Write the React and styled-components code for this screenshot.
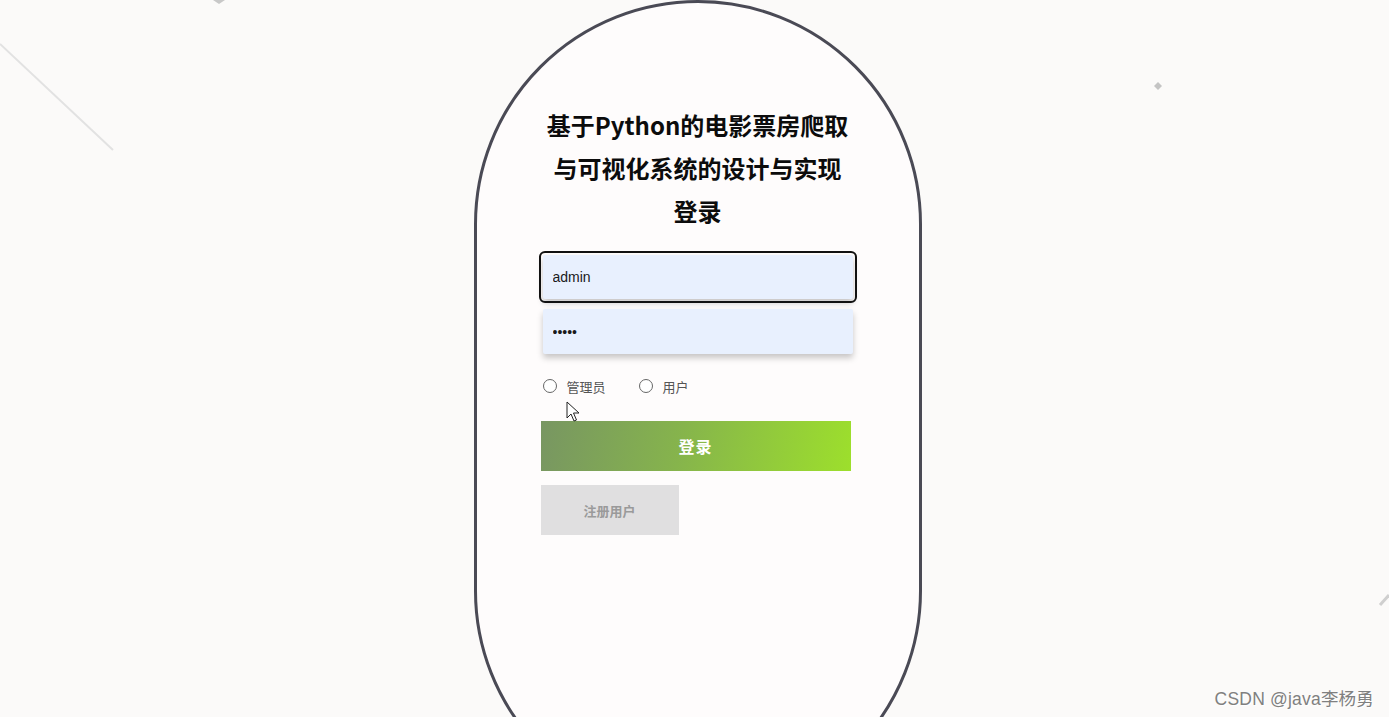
import styled, { createGlobalStyle } from 'styled-components';

const GlobalStyle = createGlobalStyle`
	html, body {
		margin: 0;
		padding: 0;
		height: 100%;
		background: #fbfaf9;
		overflow: hidden;
	}
	body {
		font-family: "Noto Sans CJK SC", "Noto Sans", sans-serif;
	}
`;

const Page = styled.div`
	position: relative;
	width: 100vw;
	height: 100vh;
	overflow: hidden;
	display: flex;
	justify-content: center;
	padding-left: 6px;
	box-sizing: border-box;
`;

const Backdrop = styled.svg`
	position: absolute;
	left: 0;
	top: 0;
	width: 100%;
	height: 100%;
	pointer-events: none;
`;

const Pill = styled.div`
	position: relative;
	width: 448px;
	height: 815px;
	flex-shrink: 0;
	box-sizing: border-box;
	border: 3px solid #4a4a55;
	border-radius: 224px;
	background: #fefcfc;
	display: flex;
	flex-direction: column;
	align-items: center;
	padding-top: 100px;
`;

const Title = styled.h2`
	margin: 0;
	font-size: 24px;
	line-height: 43px;
	font-weight: 700;
	color: #0c0c0c;
	text-align: center;
`;

const Form = styled.form`
	width: 310px;
	margin-top: 23px;
	margin-right: 4px;
	display: flex;
	flex-direction: column;
`;

const Input = styled.input`
	width: 310px;
	margin-left: 2px;
	height: ${(p) => p.$h || 44}px;
	box-sizing: border-box;
	border: none;
	border-radius: 2px;
	background: #e8f0fe;
	padding: 0 10px;
	font-family: "Liberation Sans", Arial, sans-serif;
	font-size: 14px;
	color: #1a1a1a;
	box-shadow: 0 4px 6px rgba(0, 0, 0, 0.22);
	outline: ${(p) => (p.$focus ? '2px solid #111' : 'none')};
	outline-offset: 2px;
	margin-bottom: ${(p) => p.$mb || 0}px;
`;

const RadioRow = styled.div`
	display: flex;
	align-items: center;
	height: 20px;
	margin-top: 22px;
	padding-left: 2px;
	font-size: 13px;
	color: #555;
`;

const RadioLabel = styled.label`
	display: flex;
	align-items: center;
	margin-right: 33px;
	gap: 10px;
`;

const RadioDot = styled.span`
	width: 12px;
	height: 12px;
	border: 1px solid #666;
	border-radius: 50%;
	background: #fff;
`;

const LoginButton = styled.button`
	margin-top: 25px;
	width: 310px;
	height: 50px;
	border: none;
	background: linear-gradient(100deg, #789662 0%, #86b44c 45%, #9ddf2c 100%);
	color: #fff;
	font-family: inherit;
	font-size: 16px;
	font-weight: 700;
	letter-spacing: 1px;
`;

const RegisterButton = styled.button`
	margin-top: 14px;
	width: 138px;
	height: 50px;
	border: none;
	background: #e0dfe0;
	color: #9a9a9a;
	font-family: inherit;
	font-size: 13px;
	font-weight: 700;
`;

const Pointer = styled.svg`
	position: absolute;
	left: 566px;
	top: 401px;
	width: 16px;
	height: 22px;
	pointer-events: none;
`;

const Watermark = styled.div`
	position: absolute;
	right: 15px;
	bottom: 7px;
	font-family: "Liberation Sans", "Noto Sans CJK SC", sans-serif;
	font-size: 17.5px;
	letter-spacing: 0.2px;
	color: #808080;
	text-shadow: 1px 1px 0 #ffffff;
`;

export default function App() {
	return (
		<>
			<GlobalStyle />
			<Page>
				<Backdrop viewBox="0 0 1389 717" preserveAspectRatio="none">
					<line x1="0" y1="44" x2="113" y2="150" stroke="#e2e2e2" strokeWidth="2" />
					<polygon points="213,0 225,0 219,4" fill="#c8c8c8" />
					<polygon points="1158,82 1162,86 1158,90 1154,86" fill="#c4c4c4" />
					<line x1="1380" y1="605" x2="1389" y2="595" stroke="#cfcfcf" strokeWidth="3" />
					<polygon points="812,717 858,702 862,717" fill="#e6e6e6" />
				</Backdrop>
				<Pill>
					<Title>
						基于Python的电影票房爬取
						<br />
						与可视化系统的设计与实现
						<br />
						登录
					</Title>
					<Form onSubmit={(e) => e.preventDefault()}>
						<Input $focus $mb={10} defaultValue="admin" />
						<Input type="password" $h={45} defaultValue="12345" />
						<RadioRow>
							<RadioLabel>
								<RadioDot />
								管理员
							</RadioLabel>
							<RadioLabel>
								<RadioDot />
								用户
							</RadioLabel>
						</RadioRow>
						<LoginButton type="submit">登录</LoginButton>
						<RegisterButton type="button">注册用户</RegisterButton>
					</Form>
				</Pill>
				<Pointer viewBox="0 0 16 22">
					<path d="M1 1 L1 17 L5 13 L8 20 L10.5 19 L7.5 12 L13 12 Z" fill="#fff" stroke="#222" strokeWidth="1" strokeLinejoin="round" />
				</Pointer>
				<Watermark>CSDN @java李杨勇</Watermark>
			</Page>
		</>
	);
}
